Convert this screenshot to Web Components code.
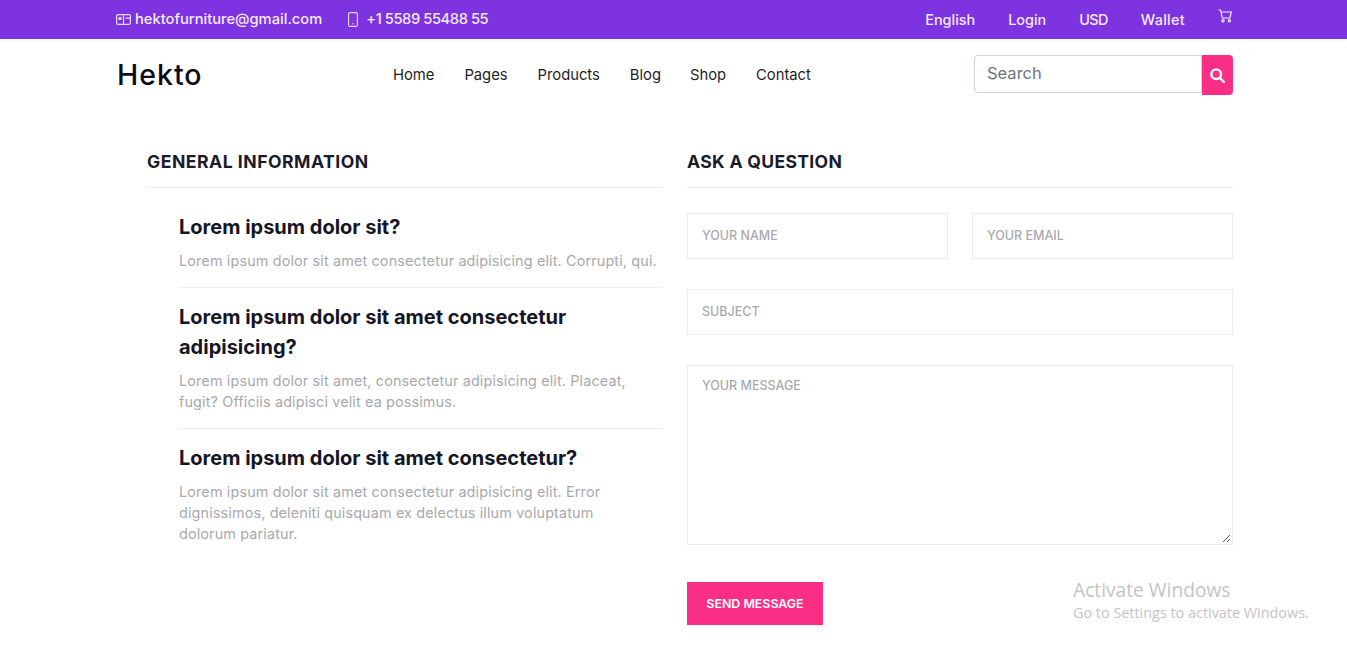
<!DOCTYPE html>
<html>
<head>
<meta charset="utf-8">
<title>Hekto</title>
<style>
html, body { margin: 0; padding: 0; background: #fff; }
body { font-family: Inter, "Liberation Sans", sans-serif; height: 651px; overflow: hidden; position: relative; }
</style>
</head>
<body>
<top-bar></top-bar>
<site-header></site-header>
<main-content></main-content>
<activate-note></activate-note>

<script>
const topBarTemplate = document.createElement('template');
topBarTemplate.innerHTML = `
<style>
:host { display: block; height: 39px; background: #7e33e0; color: #f3eafd; font-size: 14.4px; font-weight: 500; }
.bar { box-sizing: border-box; height: 100%; padding: 0 114px 1px 116px; display: flex; justify-content: space-between; align-items: center; }
.side { display: flex; align-items: center; }
.item { display: flex; align-items: center; gap: 4px; white-space: nowrap; }
.email { font-size: 14.7px; }
.phone { font-size: 14.7px; letter-spacing: -.42px; gap: 8px; margin-left: 26px; }
.right .item { margin-left: 33px; }
svg { display: block; flex: none; }
.cart { position: relative; top: -3px; margin-left: 33px; }
</style>
<div class="bar">
  <div class="side left">
    <span class="item email">
      <svg width="15" height="11" viewBox="0 0 15 11" fill="none" stroke="#e6d6fa" stroke-width="1.2"><rect x=".6" y=".6" width="13.8" height="9.8" rx="1.5"/><path d="M7.5 .6v9.8M9.5 4.2h5"/><rect x="2.5" y="3" width="3" height="3" fill="#e6d6fa" stroke="none"/></svg>
      <span>hektofurniture@gmail.com</span>
    </span>
    <span class="item phone">
      <svg width="10" height="15" viewBox="0 0 10 15" fill="none" stroke="#e6d6fa" stroke-width="1.1"><rect x=".6" y=".6" width="8.8" height="13.8" rx="1.4"/><circle cx="5" cy="11.8" r=".8" fill="#e6d6fa" stroke="none"/></svg>
      <span>+1 5589 55488 55</span>
    </span>
  </div>
  <div class="side right">
    <span class="item">English</span>
    <span class="item">Login</span>
    <span class="item" style="letter-spacing:-.6px">USD</span>
    <span class="item" style="letter-spacing:.3px">Wallet</span>
    <svg class="cart" width="15" height="14" viewBox="0 0 15 14" fill="none" stroke="#f3eafd" stroke-width="1.2"><path d="M.6 1h2l1.7 8h7.6l1.4-6H3"/><circle cx="5" cy="11.8" r="1.1"/><circle cx="11.4" cy="11.8" r="1.1"/></svg>
  </div>
</div>`;

class TopBar extends HTMLElement {
  connectedCallback() {
    const shadowRoot = this.attachShadow({ mode: 'open' });
    shadowRoot.appendChild(topBarTemplate.content.cloneNode(true));
  }
}
customElements.define('top-bar', TopBar);

const headerTemplate = document.createElement('template');
headerTemplate.innerHTML = `
<style>
:host { display: block; height: 70px; }
.row { box-sizing: border-box; height: 100%; padding: 0 114px 0 117px; display: flex; align-items: center; }
.logo { width: 276px; font-size: 28.5px; font-weight: 500; letter-spacing: 1px; color: #0c0c16; }
nav { display: flex; gap: 30px; padding-top: 2px; font-size: 14.8px; letter-spacing: -.02px; color: #1f1f26; flex: 1; }
.search { display: flex; height: 40px; margin-top: 2px; }
.box { width: 214px; height: 36px; border: 1px solid #ced4da; border-radius: 4px 0 0 4px; padding-left: 12px; font-size: 16.5px; line-height: 34px; color: #6c757d; }
.btn { width: 31px; height: 40px; background: #fb2e86; border-radius: 0 4px 4px 0; display: flex; align-items: center; justify-content: center; }
svg { display: block; }
</style>
<div class="row">
  <div class="logo">Hekto</div>
  <nav>
    <span>Home</span><span>Pages</span><span>Products</span><span>Blog</span><span style="margin-left:-1px">Shop</span><span>Contact</span>
  </nav>
  <div class="search">
    <div class="box">Search</div>
    <div class="btn"><svg width="15" height="15" viewBox="0 0 15 15" fill="none" stroke="#fff" stroke-width="2.4"><circle cx="6.2" cy="6.2" r="4.8"/><path d="M9.8 9.8l4 4" stroke-linecap="round"/></svg></div>
  </div>
</div>`;

class SiteHeader extends HTMLElement {
  connectedCallback() {
    const shadowRoot = this.attachShadow({ mode: 'open' });
    shadowRoot.appendChild(headerTemplate.content.cloneNode(true));
  }
}
customElements.define('site-header', SiteHeader);

const faqTemplate = document.createElement('template');
faqTemplate.innerHTML = `
<style>
:host { display: block; padding: 0 0 16px 0; border-bottom: 1px solid #eee; margin-bottom: 14px; }
:host(:last-child) { border-bottom: none; }
.q { margin: 0 0 8px; font-size: 20px; line-height: 30px; font-weight: 700; color: #151625; }
.a { margin: 0; font-size: 14.4px; line-height: 21px; letter-spacing: .14px; color: #a9a9ad; }
</style>
<h4 class="q"><slot name="q"></slot></h4>
<p class="a"><slot name="a"></slot></p>`;

class FaqItem extends HTMLElement {
  connectedCallback() {
    const shadowRoot = this.attachShadow({ mode: 'open' });
    shadowRoot.appendChild(faqTemplate.content.cloneNode(true));
  }
}
customElements.define('faq-item', FaqItem);

const fieldTemplate = document.createElement('template');
fieldTemplate.innerHTML = `
<style>
:host { display: block; }
.field { box-sizing: border-box; height: var(--h, 46px); border: 1px solid #ebebed; padding: var(--pt, 14px) 14px 0; font-size: 12.5px; line-height: 15px; font-weight: 500; color: #aaaaae; position: relative; }
.grip { position: absolute; right: 1px; bottom: 1px; }
</style>
<div class="field"><slot></slot><svg class="grip" id="grip" width="9" height="9" viewBox="0 0 9 9" fill="none" stroke="#555" stroke-width="1"><path d="M1 8l7-7M5 8l3-3"/></svg></div>`;

class FormField extends HTMLElement {
  connectedCallback() {
    const shadowRoot = this.attachShadow({ mode: 'open' });
    shadowRoot.appendChild(fieldTemplate.content.cloneNode(true));
    if (!this.hasAttribute('multiline')) {
      shadowRoot.getElementById('grip').remove();
    }
  }
}
customElements.define('form-field', FormField);

const mainTemplate = document.createElement('template');
mainTemplate.innerHTML = `
<style>
:host { display: block; }
.cols { padding: 37px 114px 0 147px; display: grid; grid-template-columns: 516px 546px; column-gap: 24px; }
h3 { margin: 0; padding: 3px 0 12px; font-size: 17.6px; line-height: 26px; font-weight: 700; letter-spacing: .5px; color: #1a1b2b; border-bottom: 1px solid #eee; }
h3.ask { letter-spacing: .3px; }
.list { padding: 24px 0 0 32px; }
.form { padding-top: 25px; display: flex; flex-direction: column; gap: 30px; }
.two { display: grid; grid-template-columns: 261px 261px; column-gap: 24px; }
.msg { --h: 180px; --pt: 12px; }
.send { width: 136px; height: 43px; margin-top: 7px; background: #fb2e86; color: #fff; font-size: 12.4px; font-weight: 600; display: flex; align-items: center; justify-content: center; }
</style>
<div class="cols">
  <section>
    <h3>GENERAL INFORMATION</h3>
    <div class="list">
      <faq-item>
        <span slot="q">Lorem ipsum dolor sit?</span>
        <span slot="a">Lorem ipsum dolor sit amet consectetur adipisicing elit. Corrupti, qui.</span>
      </faq-item>
      <faq-item>
        <span slot="q">Lorem ipsum dolor sit amet consectetur adipisicing?</span>
        <span slot="a">Lorem ipsum dolor sit amet, consectetur adipisicing elit. Placeat,<br>fugit? Officiis adipisci velit ea possimus.</span>
      </faq-item>
      <faq-item>
        <span slot="q">Lorem ipsum dolor sit amet consectetur?</span>
        <span slot="a">Lorem ipsum dolor sit amet consectetur adipisicing elit. Error<br>dignissimos, deleniti quisquam ex delectus illum voluptatum<br>dolorum pariatur.</span>
      </faq-item>
    </div>
  </section>
  <section>
    <h3 class="ask">ASK A QUESTION</h3>
    <div class="form">
      <div class="two">
        <form-field>YOUR NAME</form-field>
        <form-field>YOUR EMAIL</form-field>
      </div>
      <form-field>SUBJECT</form-field>
      <form-field class="msg" multiline>YOUR MESSAGE</form-field>
      <div class="send">SEND MESSAGE</div>
    </div>
  </section>
</div>`;

class MainContent extends HTMLElement {
  connectedCallback() {
    const shadowRoot = this.attachShadow({ mode: 'open' });
    shadowRoot.appendChild(mainTemplate.content.cloneNode(true));
  }
}
customElements.define('main-content', MainContent);

const noteTemplate = document.createElement('template');
noteTemplate.innerHTML = `
<style>
:host { position: absolute; left: 1073px; top: 577px; color: #c4c4c4; font-family: "Open Sans", sans-serif; white-space: nowrap; }
.a { font-size: 19.2px; line-height: 26px; }
.b { font-size: 14.4px; line-height: 20px; }
</style>
<div class="a">Activate Windows</div>
<div class="b">Go to Settings to activate Windows.</div>`;

class ActivateNote extends HTMLElement {
  connectedCallback() {
    const shadowRoot = this.attachShadow({ mode: 'open' });
    shadowRoot.appendChild(noteTemplate.content.cloneNode(true));
  }
}
customElements.define('activate-note', ActivateNote);
</script>
</body>
</html>
